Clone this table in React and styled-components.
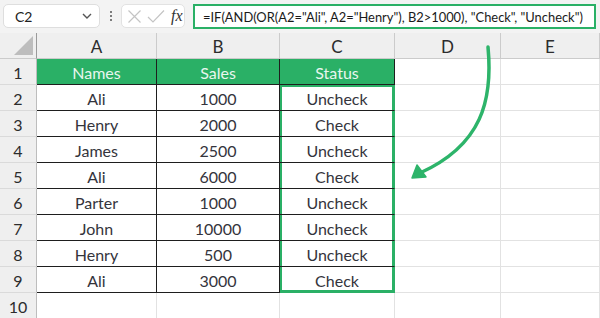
import React from "react";
import styled, { createGlobalStyle, css } from "styled-components";

const GREEN = "#2ab066";
const GRID = "#e2e2e2";
const DARK = "#1e1e1e";

const Global = createGlobalStyle`
  html, body { margin: 0; padding: 0; background: #fff; }
  body { font-family: Lato, "Liberation Sans", sans-serif; overflow: hidden; }
  * { box-sizing: border-box; }
`;

const Page = styled.div`
  position: relative;
  width: 600px;
  height: 318px;
  overflow: hidden;
  background: #fff;
`;

const Toolbar = styled.div`
  height: 33px;
  background: #f3f3f3;
  display: flex;
  align-items: flex-start;
  padding: 4px 0 0 3px;
`;

const NameBox = styled.div`
  width: 97px;
  height: 24px;
  background: #fff;
  border: 1px solid #dedede;
  border-radius: 5px;
  display: flex;
  align-items: center;
  justify-content: space-between;
  padding: 0 6px 0 11px;
  font-size: 14px;
  color: #222;
`;

const Dots = styled.div`
  width: 21px;
  height: 24px;
  display: flex;
  flex-direction: column;
  align-items: center;
  justify-content: center;
  gap: 2px;
  & > span {
    width: 2px;
    height: 2px;
    background: #555;
    border-radius: 1px;
  }
`;

const FxBox = styled.div`
  width: 64px;
  height: 24px;
  background: #fff;
  border: 1px solid #e2e2e2;
  border-radius: 5px;
  display: flex;
  align-items: center;
  padding-left: 5px;
  gap: 5px;
`;

const Fx = styled.span`
  font-family: "Liberation Serif", "DejaVu Serif", serif;
  font-style: italic;
  font-size: 16px;
  color: #333;
  margin-left: 1px;
`;

const FormulaBox = styled.div`
  margin-left: 8px;
  width: 403px;
  height: 25px;
  background: #fff;
  border: 2.5px solid ${GREEN};
  display: flex;
  align-items: center;
  padding-left: 8px;
  font-size: 12.9px;
  color: #1a1a1a;
  white-space: nowrap;
`;

const Grid = styled.div`
  display: grid;
  grid-template-columns: 37px 120px 123px 115px 106px 1fr;
  grid-auto-rows: 26px;
`;

const Cell = styled.div`
  display: flex;
  align-items: center;
  justify-content: center;
  border-right: 1px solid ${GRID};
  border-bottom: 1px solid ${GRID};
  font-size: 16px;
  color: #34343c;
  padding-top: 1px;
  ${(p) =>
    p.$table &&
    css`
      border-right-color: ${DARK};
      border-bottom-color: ${DARK};
    `}
  ${(p) =>
    p.$head &&
    css`
      background: ${GREEN};
      color: #e8f6ee;
    `}
  ${(p) =>
    p.$sel &&
    css`
      border-right-color: ${GREEN};
      box-shadow: inset 2px 0 0 ${GREEN}, inset -2px 0 0 ${GREEN}
        ${p.$first ? `, inset 0 2px 0 ${GREEN}` : ""}
        ${p.$last ? `, inset 0 -2px 0 ${GREEN}` : ""};
      ${p.$last &&
      css`
        border-bottom-color: ${GREEN};
      `}
    `}
`;

const ColHead = styled.div`
  background: #efefef;
  border-right: 1px solid #cbcbcb;
  border-bottom: 1px solid #cbcbcb;
  display: flex;
  align-items: center;
  justify-content: center;
  font-size: 17px;
  color: #2c2c2c;
  padding-top: 2px;
`;

const Corner = styled(ColHead)`
  border-right-color: #9a9a9a;
  justify-content: flex-end;
  align-items: flex-end;
  padding: 0 3px 3px 0;
`;

const RowHead = styled.div`
  background: #efefef;
  border-right: 1px solid #bdbdbd;
  border-bottom: 1px solid #dadada;
  display: flex;
  align-items: center;
  justify-content: center;
  font-size: 16px;
  color: #2c2c2c;
  padding-top: 1px;
`;

const ArrowLayer = styled.svg`
  position: absolute;
  left: 0;
  top: 0;
  pointer-events: none;
`;

const data = [
  ["Ali", "1000", "Uncheck"],
  ["Henry", "2000", "Check"],
  ["James", "2500", "Uncheck"],
  ["Ali", "6000", "Check"],
  ["Parter", "1000", "Uncheck"],
  ["John", "10000", "Uncheck"],
  ["Henry", "500", "Uncheck"],
  ["Ali", "3000", "Check"],
];

export default function App() {
  return (
    <Page>
      <Global />
      <Toolbar>
        <NameBox>
          <span>C2</span>
          <svg width="12" height="8" viewBox="0 0 12 8">
            <path d="M2 2 L6 6 L10 2" fill="none" stroke="#555" strokeWidth="1.4" />
          </svg>
        </NameBox>
        <Dots>
          <span />
          <span />
          <span />
        </Dots>
        <FxBox>
          <svg width="15" height="15" viewBox="0 0 15 15">
            <path d="M1.5 1.5 L13.5 13.5 M13.5 1.5 L1.5 13.5" stroke="#c4c4c4" strokeWidth="1.2" fill="none" />
          </svg>
          <svg width="18" height="15" viewBox="0 0 18 15">
            <path d="M1 8 L6 13 L17 1.5" stroke="#c4c4c4" strokeWidth="1.2" fill="none" />
          </svg>
          <Fx>fx</Fx>
        </FxBox>
        <FormulaBox>
          =IF(AND(OR(A2="Ali", A2="Henry"), B2&gt;1000), "Check", "Uncheck")
        </FormulaBox>
      </Toolbar>
      <Grid>
        <Corner>
          <svg width="19" height="19" viewBox="0 0 19 19">
            <polygon points="19,0 19,19 0,19" fill="#bdbdbd" />
          </svg>
        </Corner>
        {["A", "B", "C", "D", "E"].map((c) => (
          <ColHead key={c}>{c}</ColHead>
        ))}

        <RowHead>1</RowHead>
        <Cell $table $head>Names</Cell>
        <Cell $table $head>Sales</Cell>
        <Cell $table $head>Status</Cell>
        <Cell />
        <Cell />

        {data.map((r, i) => (
          <React.Fragment key={i}>
            <RowHead>{i + 2}</RowHead>
            <Cell $table>{r[0]}</Cell>
            <Cell $table>{r[1]}</Cell>
            <Cell $table $sel $first={i === 0} $last={i === data.length - 1}>
              {r[2]}
            </Cell>
            <Cell />
            <Cell />
          </React.Fragment>
        ))}

        <RowHead>10</RowHead>
        <Cell />
        <Cell />
        <Cell />
        <Cell />
        <Cell />
      </Grid>
      <ArrowLayer width="600" height="318" viewBox="0 0 600 318">
        <path
          d="M488 47 C 493 100 482 145 420 173"
          fill="none"
          stroke="#2db46a"
          strokeWidth="3.5"
          strokeLinecap="round"
        />
        <polygon points="412,178 417,165 426,177" fill="#2db46a" stroke="#2db46a" strokeWidth="1.5" strokeLinejoin="round" />
      </ArrowLayer>
    </Page>
  );
}
